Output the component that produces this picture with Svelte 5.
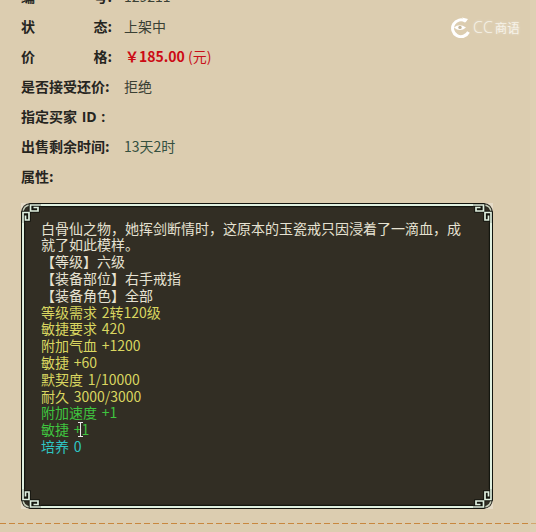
<script>
  const rows = [
    { label: '编号', value: '129211', tone: 'plain', wide: true },
    { label: '状态', value: '上架中', tone: 'plain', wide: true },
    { label: '价格', value: '', tone: 'price', wide: true },
    { label: '是否接受还价', value: '拒绝', tone: 'plain' },
    { label: '指定买家 ID', value: '', tone: 'plain', spaced: true },
    { label: '出售剩余时间', value: '13天2时', tone: 'time' },
    { label: '属性', value: '', tone: 'plain' }
  ];
  const intro = '白骨仙之物\uFF0C她挥剑断情时\uFF0C这原本的玉瓷戒只因浸着了一滴血\uFF0C成就了如此模样\u3002';
  const price = '\uFFE5185.00';
  const lines = [
    { t: '\u3010等级\u3011六级', c: 'white' },
    { t: '\u3010装备部位\u3011右手戒指', c: 'white' },
    { t: '\u3010装备角色\u3011全部', c: 'white' },
    { t: '等级需求 2转120级', c: 'yellow' },
    { t: '敏捷要求 420', c: 'yellow' },
    { t: '附加气血 +1200', c: 'yellow' },
    { t: '敏捷 +60', c: 'yellow' },
    { t: '默契度 1/10000', c: 'yellow' },
    { t: '耐久 3000/3000', c: 'yellow' },
    { t: '附加速度 +1', c: 'green' },
    { t: '敏捷 +1', c: 'green', cursor: true },
    { t: '培养 0', c: 'cyan' }
  ];
</script>

<div class="page">
  <div class="rows">
    {#each rows as r}
      <div class="row">
        {#if r.wide}
          <span class="label wide"><span>{r.label[0]}</span><span>{r.label[1]}:</span></span>
        {:else}
          <span class="label" class:spaced={r.spaced}>{r.label}{r.spaced ? ' :' : ':'}</span>
        {/if}
        {#if r.tone === 'price'}
          <span class="value price"><b>{price}</b> (元)</span>
        {:else}
          <span class="value {r.tone}">{r.value}</span>
        {/if}
      </div>
    {/each}
  </div>

  <div class="frame">
    {#each ['tl', 'tr', 'bl', 'br'] as pos}
      <svg class="corner {pos}" viewBox="0 0 20 20" width="20" height="20" aria-hidden="true">
        <rect x="0" y="0" width="9" height="9" fill="#e6dcc8" />
        <path d="M9 2Q2 2 2 9V20H20V2Z" fill="#322e24" />
        <path d="M10 2Q2 2 2 10" fill="none" stroke="#2a2820" stroke-width="3.4" />
        <path d="M10 2Q2 2 2 10" fill="none" stroke="#c4ccb8" stroke-width="1.5" />
        <path d="M20 2H9.5V8H17V4.5H12.5" fill="#14160f" stroke="#14160f" stroke-width="3.6" />
        <path d="M2 20V9.5H8V17H4.5V12.5" fill="#14160f" stroke="#14160f" stroke-width="3.6" />
        <path d="M20 2H9.5V8H17V4.5H12.5" fill="none" stroke="#e0f0e0" stroke-width="1.7" />
        <path d="M2 20V9.5H8V17H4.5V12.5" fill="none" stroke="#e0f0e0" stroke-width="1.7" />
      </svg>
    {/each}
    <div class="desc">
      <p class="white">{intro}</p>
      {#each lines as l}
        <p class={l.c}>{l.t}{#if l.cursor}<span class="ibeam"></span>{/if}</p>
      {/each}
    </div>
  </div>

  <div class="dash"></div>
  <div class="strip"></div>

  <div class="logo">
    <svg viewBox="0 0 22 21" width="22" height="21" aria-hidden="true">
      <path d="M16.5 4.2A8.4 8.4 0 1 0 19.5 15" fill="none" stroke="#fff" stroke-width="3" />
      <path d="M13 0.5l6 1.5-2.5 3.5zM5 10.5q5.5-4.5 12 0q-6 5-12 0z" fill="#fff" />
      <circle cx="11" cy="10.4" r="1.7" fill="#c4b699" />
    </svg>
    <span class="cc">CC</span><span class="zh">商语</span>
  </div>
</div>

<style>
  :global(body) {
    margin: 0;
    background: #dccdb0;
  }

  .page {
    position: relative;
    width: 536px;
    height: 532px;
    overflow: hidden;
    background: #dccdb0;
    font-family: "Noto Sans CJK SC", "Open Sans", sans-serif;
    font-size: 14px;
  }

  .rows {
    margin-top: -19px;
    padding-left: 21px;
  }

  .row {
    display: flex;
    align-items: center;
    height: 30px;
  }

  .label {
    width: 103px;
    font-weight: 700;
    color: #26251f;
    white-space: nowrap;
  }

  .label.spaced {
    font-family: "Open Sans", "Noto Sans CJK SC", sans-serif;
    word-spacing: 1px;
  }

  .label.wide {
    display: flex;
    justify-content: space-between;
    width: 91px;
    margin-right: 12px;
  }

  .value {
    color: #3a4034;
  }

  .value.time {
    color: #35503f;
  }

  .price {
    color: #c8101a;
    margin-left: 1px;
  }

  .price b {
    font-weight: 700;
    color: #cc0a14;
  }

  .frame {
    position: relative;
    box-sizing: border-box;
    width: 472px;
    height: 306px;
    margin: 12px 0 0 21px;
    background: #322e24;
    border: 1px solid #14160f;
    box-shadow: inset 0 0 0 2px #e0f0e0, inset 0 0 0 3.2px #14160f;
  }

  .corner {
    position: absolute;
  }

  .corner.tl { left: -1px; top: -1px; }
  .corner.tr { right: -1px; top: -1px; transform: scaleX(-1); }
  .corner.bl { left: -1px; bottom: -1px; transform: scaleY(-1); }
  .corner.br { right: -1px; bottom: -1px; transform: scale(-1, -1); }

  .desc {
    padding: 15.6px 26px 0 19px;
    line-height: 16.8px;
    font-size: 14px;
    word-spacing: 1.5px;
  }

  .desc p {
    margin: 0;
  }

  .white { color: #e6e2d2; }
  .yellow { color: #d9d660; }
  .green { color: #3fc43f; }
  .cyan { color: #2ec6c4; }

  .ibeam {
    position: absolute;
    box-sizing: border-box;
    width: 5px;
    height: 15px;
    margin: 1px 0 0 -11px;
    border-top: 1px solid #e8e8e8;
    border-bottom: 1px solid #e8e8e8;
    background: linear-gradient(#e8e8e8, #e8e8e8) center / 1px 100% no-repeat;
  }

  .dash {
    position: absolute;
    left: 0;
    right: 0;
    top: 523px;
    height: 1px;
    background: repeating-linear-gradient(90deg, #c8873e 0 6px, transparent 6px 9px);
  }

  .strip {
    position: absolute;
    top: 0;
    right: 0;
    bottom: 0;
    width: 6px;
    background: #e2d5ba;
    opacity: 0.4;
  }

  .logo {
    position: absolute;
    left: 449px;
    top: 17px;
    display: flex;
    align-items: center;
    color: #f6f2e8;
    line-height: 21px;
    text-shadow: 0 0 3px rgba(255, 255, 255, 0.45);
  }

  .logo .cc {
    margin-left: 2px;
    font-family: "Open Sans", sans-serif;
    font-size: 16px;
    font-weight: 300;
  }

  .logo .zh {
    margin-left: 2px;
    font-size: 12.5px;
  }
</style>
